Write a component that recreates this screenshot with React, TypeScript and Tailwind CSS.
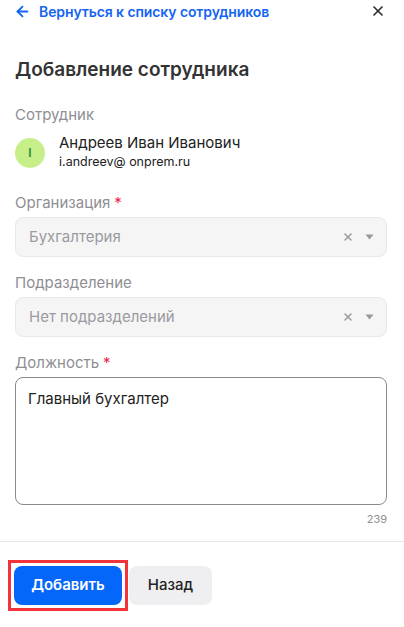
import { ArrowLeft, X } from "lucide-react";

function Label({ text, required }: { text: string; required?: boolean }) {
  return (
    <div className="text-[15px] leading-[20px] text-[#8e8e93] mb-[4px]">
      {text}
      {required && <span className="text-[#f0224b] ml-[4px]">*</span>}
    </div>
  );
}

function SelectBox({ value }: { value: string }) {
  return (
    <div className="flex items-center h-[40px] rounded-[8px] border border-[#e9e9eb] bg-[#f5f5f6] pl-[13px] pr-[12px]">
      <span className="flex-1 text-[15px] text-[#9a9a9e]">{value}</span>
      <X className="w-[12px] h-[12px] text-[#9a9a9e]" strokeWidth={3} />
      <svg className="ml-[11px]" width="9" height="6" viewBox="0 0 9 6">
        <path d="M0.5 0.5h8L4.5 5.5z" fill="#9a9a9e" />
      </svg>
    </div>
  );
}

export default function App() {
  return (
    <div className="w-[404px] h-[627px] bg-white overflow-hidden flex flex-col font-['Inter',sans-serif]">
      {/* header */}
      <div className="flex items-center h-[22px] pl-[14px] pr-[18px]">
        <ArrowLeft className="w-[17px] h-[17px] text-[#1565f2]" strokeWidth={2.6} />
        <span className="ml-[8px] text-[14px] font-semibold text-[#1565f2] tracking-[-0.1px]">
          Вернуться к списку сотрудников
        </span>
        <X className="ml-auto w-[16px] h-[16px] text-[#2b2b2b]" strokeWidth={2.5} />
      </div>

      <div className="flex-1 pl-[15px] pr-[17px]">
        <h1 className="mt-[35px] text-[19px] leading-[26px] font-semibold text-[#333333]">
          Добавление сотрудника
        </h1>

        <div className="mt-[22px]">
          <Label text="Сотрудник" />
          <div className="flex items-start mt-[8px]">
            <div className="w-[30px] h-[30px] mt-[5px] rounded-full bg-[#c6ef8a] flex items-center justify-center text-[12px] font-semibold text-[#2f8a2a]">
              I
            </div>
            <div className="ml-[14px]">
              <div className="text-[15px] leading-[20px] text-[#222222]">Андреев Иван Иванович</div>
              <div className="text-[12.5px] leading-[18px] text-[#222222]">i.andreev@ onprem.ru</div>
            </div>
          </div>
        </div>

        <div className="mt-[22px]">
          <Label text="Организация" required />
          <SelectBox value="Бухгалтерия" />
        </div>

        <div className="mt-[16px]">
          <Label text="Подразделение" />
          <SelectBox value="Нет подразделений" />
        </div>

        <div className="mt-[16px]">
          <Label text="Должность" required />
          <div className="h-[128px] rounded-[8px] border border-[#8a8a8e] px-[12px] pt-[10px] text-[15px] text-[#222222]">
            Главный бухгалтер
          </div>
          <div className="text-right text-[11px] leading-[14px] mt-[7px] text-[#8e8e93]">239</div>
        </div>
      </div>

      {/* footer */}
      <div className="h-[86px] border-t border-[#e6e6e8] flex items-start pl-[8px] pt-[18px]">
        <div className="border-[3px] border-[#f2333a] p-[3px]">
          <button className="w-[108px] h-[39px] rounded-[8px] bg-[#0567fa] text-white text-[15px] font-semibold">
            Добавить
          </button>
        </div>
        <button className="ml-[1px] mt-[6px] w-[83px] h-[39px] rounded-[8px] bg-[#efeff1] text-[#222222] text-[15px] font-medium">
          Назад
        </button>
      </div>
    </div>
  );
}
